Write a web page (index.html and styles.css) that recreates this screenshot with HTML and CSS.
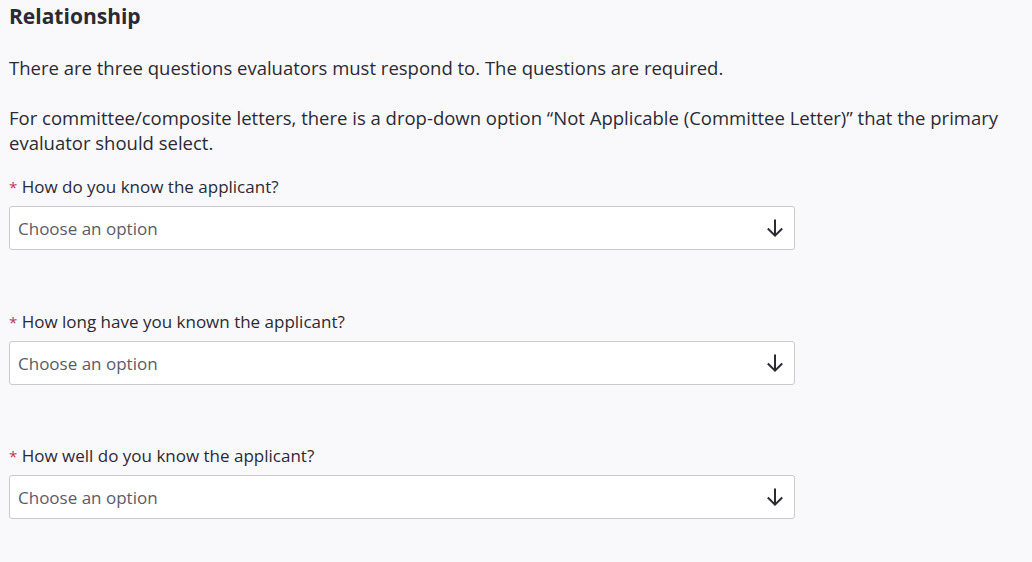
FILE: index.html
```html
<!DOCTYPE html>
<html>
<head>
<meta charset="utf-8">
<link rel="stylesheet" href="styles.css">
</head>
<body>
<main class="page">
  <h2 class="title">Relationship</h2>
  <p class="intro">There are three questions evaluators must respond to. The questions are required.</p>
  <p class="intro intro-2">For committee/composite letters, there is a drop-down option “Not Applicable (Committee Letter)” that the primary evaluator should select.</p>

  <div class="field">
    <label class="label"><span class="req">*</span> How do you know the applicant?</label>
    <div class="select"><span class="placeholder">Choose an option</span>
      <svg class="arrow" width="20" height="20" viewBox="0 0 20 20"><path d="M10 1.5v16M2.8 10.5l7.2 7.2 7.2-7.2" fill="none" stroke="#2b2a33" stroke-width="2"/></svg>
    </div>
  </div>

  <div class="field field-2">
    <label class="label"><span class="req">*</span> How long have you known the applicant?</label>
    <div class="select"><span class="placeholder">Choose an option</span>
      <svg class="arrow" width="20" height="20" viewBox="0 0 20 20"><path d="M10 1.5v16M2.8 10.5l7.2 7.2 7.2-7.2" fill="none" stroke="#2b2a33" stroke-width="2"/></svg>
    </div>
  </div>

  <div class="field field-3">
    <label class="label"><span class="req">*</span> How well do you know the applicant?</label>
    <div class="select"><span class="placeholder">Choose an option</span>
      <svg class="arrow" width="20" height="20" viewBox="0 0 20 20"><path d="M10 1.5v16M2.8 10.5l7.2 7.2 7.2-7.2" fill="none" stroke="#2b2a33" stroke-width="2"/></svg>
    </div>
  </div>
</main>
</body>
</html>
```

FILE: styles.css
```css
html, body {
  margin: 0;
  background: #f9f9fc;
}
body {
  font-family: "Open Sans", "Liberation Sans", sans-serif;
  color: #2b2a33;
  font-size: 18.5px;
}
.page {
  padding: 1px 0 0 9px;
}
.title {
  margin: 0;
  font-size: 21px;
  font-weight: 700;
  line-height: 30px;
}
.intro {
  margin: 24px 0 0 0;
  line-height: 25px;
}
.intro-2 {
  margin-top: 25px;
}
.field {
  margin-top: 20px;
  width: 786px;
}
.field-2 {
  margin-top: 60px;
}
.field-3 {
  margin-top: 59px;
}
.label {
  display: block;
  line-height: 24px;
  font-size: 17px;
}
.req {
  color: #c0325a;
  font-size: 15px;
}
.select {
  margin-top: 7px;
  height: 42px;
  border: 1px solid #c9c9cf;
  border-radius: 3px;
  background: #fff;
  display: flex;
  align-items: center;
  justify-content: space-between;
  padding: 0 9px 0 8px;
}
.placeholder {
  color: #5b5b66;
  font-size: 17px;
}
.arrow {
  display: block;
}
```
